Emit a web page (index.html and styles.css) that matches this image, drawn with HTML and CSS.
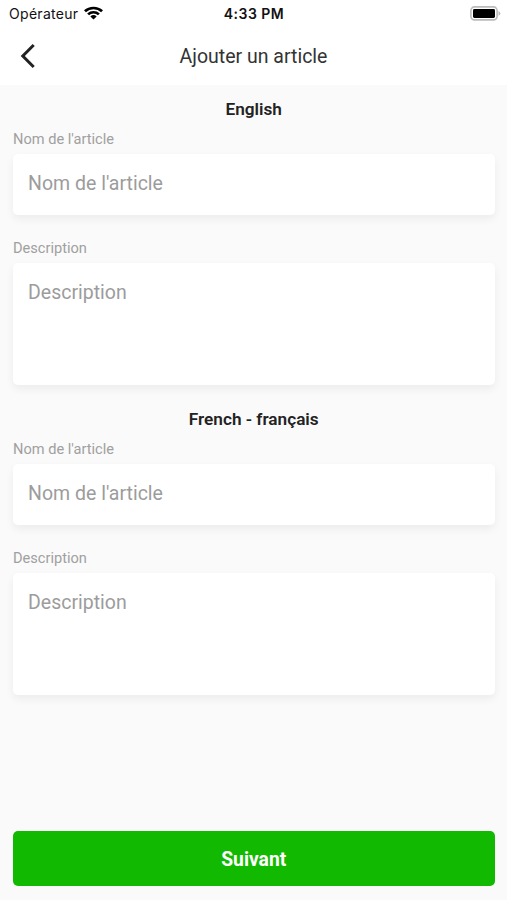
FILE: index.html
```html
<!DOCTYPE html>
<html lang="fr">
<head>
<meta charset="utf-8">
<title>Ajouter un article</title>
<link rel="stylesheet" href="styles.css">
</head>
<body>
<div class="screen">
  <header class="top">
    <div class="status">
      <div class="carrier"><span>Opérateur</span>
        <svg class="wifi" viewBox="0 0 18 14" width="19" height="14" preserveAspectRatio="none"><path d="M0 4.3a13 13 0 0 1 18 0l-1.8 1.9a10.4 10.4 0 0 0-14.4 0zM3 7.4a8.7 8.7 0 0 1 12 0l-1.8 1.9a6.1 6.1 0 0 0-8.4 0zM6 10.5a4.3 4.3 0 0 1 6 0l-3 3z"/></svg>
      </div>
      <div class="clock">4:33 PM</div>
      <svg class="battery" viewBox="0 0 31 15" width="31" height="15"><rect x=".9" y=".9" width="26.2" height="13" rx="3.6" fill="#fff" stroke="#bbb" stroke-width="1.6"/><rect x="3" y="3" width="22" height="9" rx="1.4"/><path d="M28.5 5q3.8 2.4 0 4.8z" fill="#bbb"/></svg>
    </div>
    <div class="nav">
      <svg class="back" viewBox="0 0 16 26" width="16" height="26"><path d="M13.7 2 2.8 13l10.9 11"/></svg>
      <h1>Ajouter un article</h1>
    </div>
  </header>
  <main class="form">
    <section class="language">
      <h2>English</h2>
      <label for="name-en">Nom de l'article</label>
      <input id="name-en" class="field" placeholder="Nom de l'article">
      <label for="desc-en">Description</label>
      <textarea id="desc-en" class="field area" placeholder="Description"></textarea>
    </section>
    <section class="language">
      <h2>French - français</h2>
      <label for="name-fr">Nom de l'article</label>
      <input id="name-fr" class="field" placeholder="Nom de l'article">
      <label for="desc-fr">Description</label>
      <textarea id="desc-fr" class="field area" placeholder="Description"></textarea>
    </section>
  </main>
  <footer class="actions"><button class="next">Suivant</button></footer>
</div>
</body>
</html>
```

FILE: styles.css
```css
* { box-sizing: border-box; }
body { margin: 0; font-family: Roboto, sans-serif; }
.screen { height: 900px; display: flex; flex-direction: column; background: #fafafa; overflow: hidden; }
.top { height: 85px; background: #fff; }
.status { height: 27px; display: grid; grid-template-columns: 1fr auto 1fr; align-items: center; padding: 0 6px 0 9px; font: 14px/27px Inter, sans-serif; color: #111; }
.carrier { display: flex; align-items: center; gap: 6px; letter-spacing: .3px; }
.wifi { margin-top: -1px; }
.clock { font-weight: 600; letter-spacing: .48px; margin-left: -2px; }
.battery { justify-self: end; }
.nav { height: 58px; display: grid; grid-template-columns: 56px 1fr 56px; align-items: center; }
.back { margin-left: 20px; fill: none; stroke: #222; stroke-width: 3; }
h1 { margin: 0; text-align: center; font-size: 19.5px; font-weight: 400; color: #333; }
.form { flex: 1; padding: 1px 12.5px 0 13px; }
.language { height: 310.4px; }
h2 { margin: 0; padding-top: 12px; height: 42px; font-size: 17.2px; line-height: 22px; font-weight: 600; text-align: center; color: #222; }
label { display: block; height: 26px; font-size: 14.6px; line-height: 22px; color: #a0a0a0; }
.field { display: block; width: 100%; height: 61px; margin: 0 0 21.5px; padding: 0 15px 3px; border: 0; border-radius: 5px; background: #fff; box-shadow: 0 4px 8px rgba(0,0,0,.06); font: 19.5px/24px Roboto, sans-serif; outline: 0; }
.field::placeholder { color: #9c9c9c; opacity: 1; }
.area { height: 122px; padding-top: 18px; margin: 0; resize: none; }
.actions { padding: 0 12.5px 14px 13px; }
.next { display: block; width: 100%; height: 55px; padding-top: 3px; border: 0; border-radius: 5px; background: #11b900; color: #fff; font: 700 19.3px/24px Roboto, sans-serif; }
```
